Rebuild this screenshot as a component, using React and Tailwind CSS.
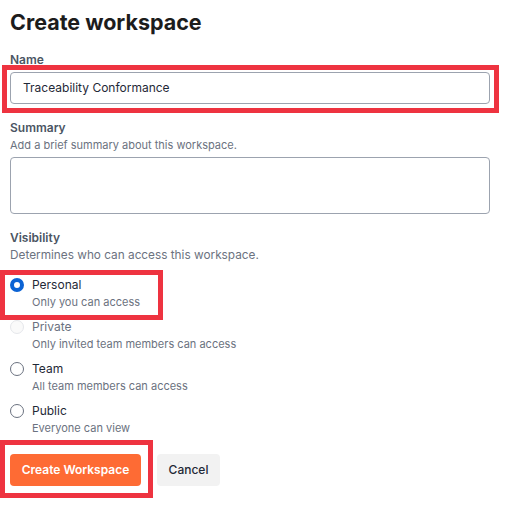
const options = [
    { id: 'personal', label: 'Personal', hint: 'Only you can access', checked: true },
    { id: 'private', label: 'Private', hint: 'Only invited team members can access', disabled: true },
    { id: 'team', label: 'Team', hint: 'All team members can access' },
    { id: 'public', label: 'Public', hint: 'Everyone can view' },
];

function Radio({ checked, disabled }) {
    if (checked) {
        return <span className="w-[14px] h-[14px] rounded-full border-[4px] border-[#0b63d4] bg-white flex-shrink-0" />;
    }
    return (
        <span
            className={
                disabled
                    ? "w-[14px] h-[14px] rounded-full border border-[#e5e7eb] bg-[#fafafa] flex-shrink-0"
                    : "w-[14px] h-[14px] rounded-full border border-[#6b7280] bg-white flex-shrink-0"
            }
        />
    );
}

export default function App() {
    return (
        <div className="w-[506px] h-[506px] bg-white pl-[10px] pr-[16px] pt-[6px] font-['Inter',sans-serif] overflow-hidden">
            <h1 className="text-[21.5px] leading-[32px] font-bold text-[#1c1c1c]">Create workspace</h1>

            {/* Name */}
            <label className="block mt-[14px] text-[12px] leading-[16px] font-semibold text-[#4b5563]">Name</label>
            <div className="relative mt-[4px]">
                <div className="h-[32px] border border-[#9ca3af] rounded-[4px] flex items-center pl-[12px] text-[12px] text-[#1f2937]">
                    Traceability Conformance
                </div>
                <span className="absolute -left-[8px] -top-[7px] -right-[9px] -bottom-[9px] border-[5px] border-[#ee3340] pointer-events-none" />
            </div>

            {/* Summary */}
            <label className="block mt-[16px] text-[12px] leading-[16px] font-semibold text-[#4b5563]">Summary</label>
            <p className="mt-[1px] text-[11px] leading-[16px] text-[#6b7280]">Add a brief summary about this workspace.</p>
            <div className="mt-[4px] h-[57px] border border-[#9ca3af] rounded-[4px]" />

            {/* Visibility */}
            <label className="block mt-[16px] text-[12px] leading-[16px] font-semibold text-[#4b5563]">Visibility</label>
            <p className="mt-[1px] text-[11.8px] leading-[16px] text-[#6b7280]">Determines who can access this workspace.</p>

            <div className="mt-[13px] flex flex-col gap-[8px]">
                {options.map((o) => (
                    <div key={o.id} className="relative">
                        <div className="flex items-center gap-[8px] h-[18px]">
                            <Radio checked={o.checked} disabled={o.disabled} />
                            <span className={"text-[12px] leading-[18px] " + (o.disabled ? "text-[#6b7280]" : "text-[#1f2937]")}>
                                {o.label}
                            </span>
                        </div>
                        <p className="pl-[22px] text-[11px] leading-[16px] text-[#6b7280]">{o.hint}</p>
                        {o.checked && (
                            <span className="absolute -left-[10px] -top-[6px] w-[163px] h-[50px] border-[5px] border-[#ee3340] pointer-events-none" />
                        )}
                    </div>
                ))}
            </div>

            <div className="mt-[18px] flex items-center gap-[16px]">
                <div className="relative">
                    <button className="h-[32px] w-[131px] rounded-[4px] bg-[#fe6b34] text-white text-[12px] font-semibold">
                        Create Workspace
                    </button>
                    <span className="absolute -left-[10px] -top-[14px] w-[153px] h-[58px] border-[5px] border-[#ee3340] pointer-events-none" />
                </div>
                <button className="h-[32px] w-[63px] rounded-[4px] bg-[#f2f2f2] text-[#1f2937] text-[12px] font-medium">
                    Cancel
                </button>
            </div>
        </div>
    );
}
